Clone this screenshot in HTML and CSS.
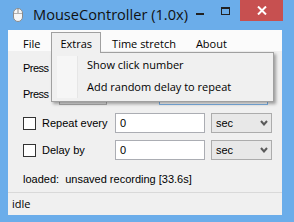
FILE: index.html
```html
<!DOCTYPE html>
<html>
<head>
<meta charset="utf-8">
<link rel="stylesheet" href="styles.css">
</head>
<body>
<div class="window">
  <div class="titlebar">
    <svg class="app-icon" width="10" height="14" viewBox="0 0 10 14">
      <rect x="0.5" y="0.5" width="9" height="13" rx="4.5" ry="4.5" fill="#f6f6f6" stroke="#8a8a8a"/>
      <line x1="5" y1="1" x2="5" y2="5.5" stroke="#8a8a8a"/>
      <line x1="1" y1="5.5" x2="9" y2="5.5" stroke="#b0b0b0"/>
    </svg>
    <div class="title">MouseController (1.0x)</div>
    <div class="controls">
      <span class="ctl-min"></span>
      <span class="ctl-max"></span>
      <div class="ctl-close">
        <svg width="10" height="9" viewBox="0 0 10 9"><path d="M1 0.5 L9 8.5 M9 0.5 L1 8.5" stroke="#fff" stroke-width="2"/></svg>
      </div>
    </div>
  </div>
  <div class="client">
    <div class="menubar">
      <div class="menu-item">File</div>
      <div class="menu-item open">Extras</div>
      <div class="menu-item">Time stretch</div>
      <div class="menu-item">About</div>
    </div>
    <div class="dropdown">
      <div class="gutter"></div>
      <div class="drop-item">Show click number</div>
      <div class="drop-item">Add random delay to repeat</div>
    </div>
    <div class="content">
      <div class="row row-press1"><span class="label lbl-press">Press</span></div>
      <div class="row row-press2"><span class="label lbl-press">Press</span><span class="btn"></span><span class="hotbox"></span></div>
      <div class="row row-repeat">
        <span class="check"></span><span class="label lbl-check">Repeat every</span>
        <span class="input">0</span>
        <span class="select">sec<svg width="8" height="6" viewBox="0 0 8 6"><path d="M1 1 L4 4.5 L7 1" fill="none" stroke="#5a5a5a" stroke-width="2"/></svg></span>
      </div>
      <div class="row row-delay">
        <span class="check"></span><span class="label lbl-check">Delay by</span>
        <span class="input">0</span>
        <span class="select">sec<svg width="8" height="6" viewBox="0 0 8 6"><path d="M1 1 L4 4.5 L7 1" fill="none" stroke="#5a5a5a" stroke-width="2"/></svg></span>
      </div>
      <div class="loaded">loaded:&nbsp; unsaved recording [33.6s]</div>
    </div>
    <div class="statusbar">idle</div>
  </div>
</div>
</body>
</html>
```
FILE: styles.css
```css
html, body {
  margin: 0;
  padding: 0;
}
body {
  width: 294px;
  height: 222px;
  overflow: hidden;
  font-family: "Open Sans", "Noto Sans", sans-serif;
  color: #000;
}
.window {
  width: 294px;
  height: 222px;
  background: #6badea;
  display: flex;
  flex-direction: column;
  box-sizing: border-box;
}
.titlebar {
  height: 30px;
  display: flex;
  align-items: flex-start;
  flex: none;
}
.app-icon {
  margin: 8px 0 0 13px;
  flex: none;
}
.title {
  margin: 3px 0 0 10px;
  font-size: 14.6px;
  line-height: 22px;
  color: #111;
}
.controls {
  margin-left: auto;
  margin-right: 11px;
  display: flex;
  align-items: flex-start;
}
.ctl-min {
  margin-top: 13px;
  width: 8px;
  height: 2px;
  background: #222;
  margin-right: 17px;
}
.ctl-max {
  margin-top: 7px;
  width: 7px;
  height: 5px;
  border: 1px solid #222;
  border-top-width: 2px;
  margin-right: 10px;
}
.ctl-close {
  width: 43px;
  height: 21px;
  background: #c75050;
  display: flex;
  align-items: center;
  justify-content: center;
}
.client {
  flex: 1;
  margin: 0 12px 7px 8px;
  background: #f0f0f0;
  display: flex;
  flex-direction: column;
  position: relative;
}
.menubar {
  height: 21px;
  background: #fbfbfb;
  display: flex;
  gap: 2px;
  padding-left: 6px;
  flex: none;
}
.menu-item {
  font-size: 11px;
  line-height: 19px;
  padding: 1px 8px 0;
  border: 1px solid transparent;
  border-bottom: none;
  margin-top: 2px;
}
.menu-item.open {
  border-color: #a0a0a0;
  background: #f0f0f0;
  position: relative;
  z-index: 3;
  height: 19px;
}
.dropdown {
  position: absolute;
  left: 43px;
  top: 22px;
  width: 223px;
  height: 50px;
  border: 1px solid #a0a0a0;
  background: #f0f0f0;
  box-shadow: 2px 2px 3px rgba(0,0,0,0.35);
  z-index: 2;
  padding-top: 1px;
  box-sizing: border-box;
}
.gutter {
  position: absolute;
  left: 5px;
  top: 3px;
  width: 20px;
  bottom: 3px;
  background: #f6f6f6;
  border-right: 1px solid #e6e6e6;
}
.drop-item {
  position: relative;
  font-size: 11px;
  height: 22px;
  line-height: 22px;
  padding-left: 35px;
}
.content {
  flex: 1;
  padding: 7px 0 0 15px;
  display: flex;
  flex-direction: column;
  font-family: "Liberation Sans", Arial, sans-serif;
  font-size: 11px;
}
.row {
  display: flex;
  align-items: center;
  height: 20px;
  flex: none;
}
.row-press2 { margin-top: 6px; }
.row-repeat { margin-top: 9px; }
.row-delay { margin-top: 7px; }
.label {
  line-height: 20px;
}
.lbl-press {
  width: 36px;
  letter-spacing: -0.5px;
}
.btn {
  width: 46px;
  height: 19px;
  border: 1px solid #acacac;
  background: #e5e5e5;
  align-self: flex-end;
  margin-bottom: -1px;
}
.hotbox {
  margin-left: 52px;
  width: 107px;
  height: 19px;
  border: 1px solid #7eb4ea;
  background: #fff;
}
.check {
  width: 11px;
  height: 11px;
  border: 1px solid #333;
  background: #fff;
  flex: none;
}
.lbl-check {
  margin-left: 6px;
  width: 73px;
}
.input {
  width: 84px;
  height: 18px;
  border: 1px solid #abadb3;
  background: #fff;
  padding-left: 4px;
  line-height: 18px;
}
.select {
  margin-left: 6px;
  width: 52px;
  height: 18px;
  border: 1px solid #acacac;
  background: #e8e8e8;
  padding-left: 4px;
  padding-right: 3px;
  line-height: 18px;
  display: flex;
  align-items: center;
  justify-content: space-between;
}
.loaded {
  margin-top: 9px;
  line-height: 20px;
}
.statusbar {
  height: 22px;
  border-top: 1px solid #d9d9d9;
  padding-left: 4px;
  font-size: 11px;
  line-height: 21px;
  flex: none;
}
```
